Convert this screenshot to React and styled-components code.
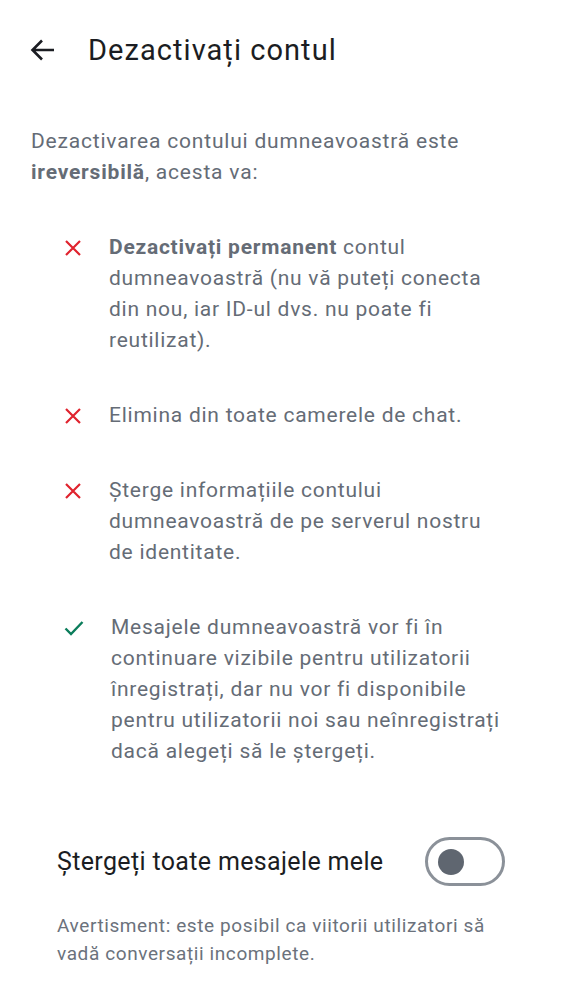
import React from "react";
import styled, { createGlobalStyle } from "styled-components";

const Global = createGlobalStyle`
  html, body { margin: 0; padding: 0; background: #ffffff; }
  body { font-family: Roboto, "Noto Sans", sans-serif; -webkit-font-smoothing: antialiased; }
  * { box-sizing: border-box; }
`;

const Page = styled.div`
  width: 562px;
  min-height: 1000px;
  background: #fff;
  display: flex;
  flex-direction: column;
`;

const Header = styled.header`
  display: flex;
  align-items: center;
  height: 100px;
  padding: 0 0 0 30px;
  gap: 32px;
`;

const BackButton = styled.button`
  border: none;
  background: none;
  padding: 0;
  width: 26px;
  height: 26px;
  display: flex;
  align-items: center;
  justify-content: center;
  color: #1b1d22;
`;

const Title = styled.h1`
  margin: 0;
  font-size: 29px;
  font-weight: 400;
  color: #1b1d22;
  letter-spacing: 1.05px;
`;

const Content = styled.main`
  padding: 26px 31px 0 31px;
  display: flex;
  flex-direction: column;
`;

const Intro = styled.p`
  margin: 0;
  font-size: 21px;
  line-height: 31px;
  letter-spacing: 0.8px;
  color: #656c76;
`;

const Strong = styled.b`
  font-weight: 700;
`;

const List = styled.ul`
  list-style: none;
  margin: 44px 0 0 0;
  padding: 0 0 0 33px;
  display: flex;
  flex-direction: column;
  gap: 44px;
`;

const Item = styled.li`
  display: flex;
  align-items: flex-start;
  gap: 27px;
`;

const IconBox = styled.span`
  flex: 0 0 18px;
  height: 31px;
  display: flex;
  align-items: center;
  justify-content: center;
  color: ${(p) => (p.$ok ? "#0b7d5b" : "#e0232e")};
`;

const ItemText = styled.span`
  font-size: 21px;
  line-height: 31px;
  letter-spacing: 0.75px;
  color: #656c76;
  width: 400px;
`;

const ToggleRow = styled.div`
  margin-top: 70px;
  padding: 0 57px;
  display: flex;
  align-items: center;
  justify-content: space-between;
`;

const ToggleLabel = styled.span`
  font-size: 25px;
  letter-spacing: 0.35px;
  color: #1b1d22;
`;

const Switch = styled.span`
  width: 80px;
  height: 49px;
  border: 3px solid #8b9199;
  border-radius: 25px;
  display: flex;
  align-items: center;
  padding-left: 10px;
`;

const Knob = styled.span`
  width: 26px;
  height: 26px;
  border-radius: 50%;
  background: #5f6670;
`;

const Warning = styled.p`
  margin: 26px 0 0 0;
  padding: 0 57px;
  font-size: 19px;
  line-height: 28px;
  color: #6b727c;
  letter-spacing: 0.6px;
`;

const Cross = () => (
  <svg width="18" height="18" viewBox="0 0 18 18" fill="none">
    <path d="M2 2L16 16M16 2L2 16" stroke="currentColor" strokeWidth="2.2" />
  </svg>
);

const Check = () => (
  <svg width="20" height="16" viewBox="0 0 20 16" fill="none">
    <path d="M1.5 8.5L7 14L18.5 2" stroke="currentColor" strokeWidth="2.4" />
  </svg>
);

const Arrow = () => (
  <svg width="26" height="26" viewBox="0 0 26 26" fill="none">
    <path d="M24 13H3M12 3.5L2.5 13L12 22.5" stroke="currentColor" strokeWidth="2.6" />
  </svg>
);

export default function App() {
  return (
    <Page>
      <Global />
      <Header>
        <BackButton aria-label="Înapoi">
          <Arrow />
        </BackButton>
        <Title>Dezactivați contul</Title>
      </Header>
      <Content>
        <Intro>
          Dezactivarea contului dumneavoastră este <Strong>ireversibilă</Strong>, acesta va:
        </Intro>
        <List>
          <Item>
            <IconBox><Cross /></IconBox>
            <ItemText>
              <Strong>Dezactivați permanent</Strong> contul dumneavoastră (nu vă puteți conecta din
              nou, iar ID-ul dvs. nu poate fi reutilizat).
            </ItemText>
          </Item>
          <Item>
            <IconBox><Cross /></IconBox>
            <ItemText>Elimina din toate camerele de chat.</ItemText>
          </Item>
          <Item>
            <IconBox><Cross /></IconBox>
            <ItemText>
              Șterge informațiile contului dumneavoastră de pe serverul nostru de identitate.
            </ItemText>
          </Item>
          <Item>
            <IconBox $ok><Check /></IconBox>
            <ItemText>
              Mesajele dumneavoastră vor fi în continuare vizibile pentru utilizatorii
              înregistrați, dar nu vor fi disponibile pentru utilizatorii noi sau neînregistrați
              dacă alegeți să le ștergeți.
            </ItemText>
          </Item>
        </List>
      </Content>
      <ToggleRow>
        <ToggleLabel>Ștergeți toate mesajele mele</ToggleLabel>
        <Switch role="switch" aria-checked="false">
          <Knob />
        </Switch>
      </ToggleRow>
      <Warning>
        Avertisment: este posibil ca viitorii utilizatori să vadă conversații incomplete.
      </Warning>
    </Page>
  );
}
